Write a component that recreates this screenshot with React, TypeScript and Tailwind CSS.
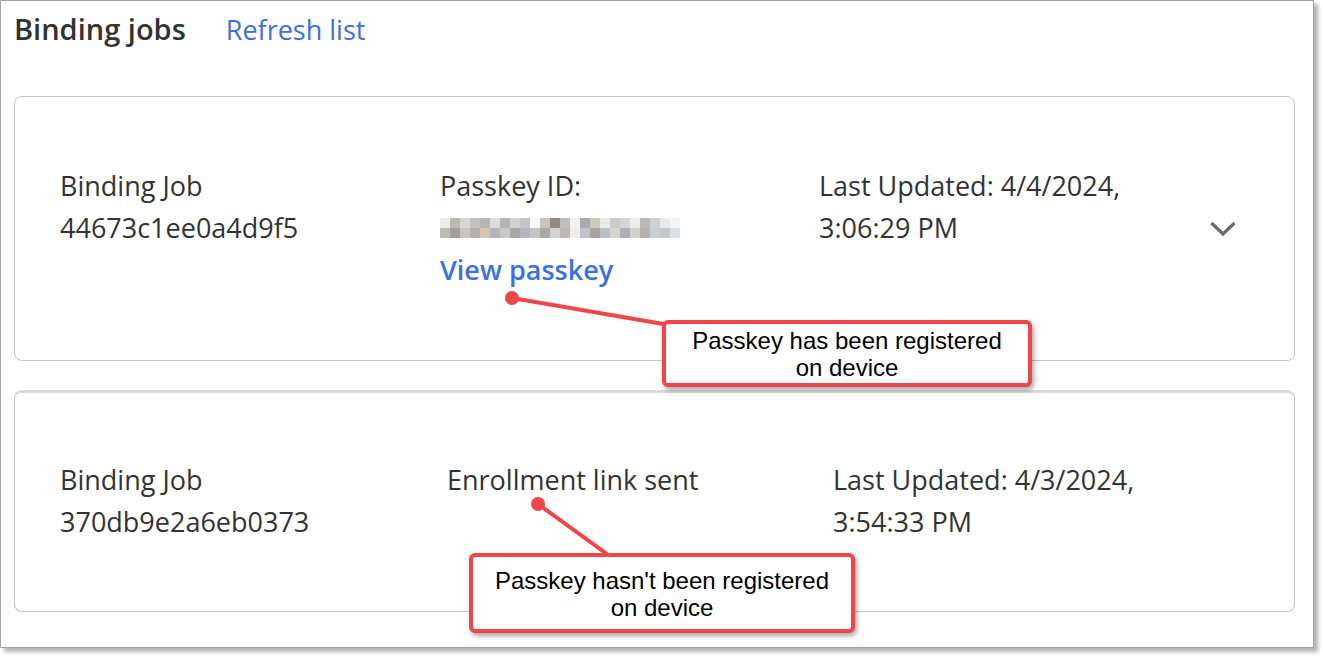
import React from "react";

const font = { fontFamily: "'Open Sans', 'Liberation Sans', sans-serif" };

const mosaic = [
  ["#eeeae6", "#bcb8b3", "#d9d6d2", "#c4c2c0", "#b7b6b2", "#dcdcdc", "#b8b3ad", "#cfd2d6", "#c2c4c6", "#fafafa", "#c9c3bb", "#8f8c87", "#c0bfbd", "#f4f2ee", "#a9aab0", "#cfc8bf", "#e9e9ea", "#cfcac3", "#d4d6d9", "#f0ede8", "#bcb9b5", "#cfd0d2", "#e8eaee", "#f5f5f5"],
  ["#b9bcb7", "#a19f99", "#c9c6c2", "#b5b1ab", "#d4c6b4", "#b3b6ba", "#c8c8c8", "#a9a6a5", "#b7b4c0", "#c3c6c4", "#a8a9a6", "#d5d2cf", "#bbb9b7", "#efedeb", "#c1c3c8", "#a7a5a4", "#bcbec1", "#d8d6d3", "#adb1b5", "#cfd1d3", "#b4b3b1", "#cacdd1", "#c5c7c9", "#dcdfe3"],
];

const Mosaic = () => (
  <svg width="240" height="20" viewBox="0 0 240 20" className="block">
    {mosaic.map((row, r) =>
      row.map((c, i) => (
        <rect key={`${r}-${i}`} x={i * 10} y={r * 10} width="10" height="10" fill={c} />
      ))
    )}
  </svg>
);

const Chevron = () => (
  <svg width="26" height="16" viewBox="0 0 26 16" fill="none">
    <path d="M1.5 2 L13 13 L24.5 2" stroke="#6b6b6b" strokeWidth="3.2" />
  </svg>
);

const Callout = ({ className, children }: { className: string; children: React.ReactNode }) => (
  <div
    className={`absolute rounded-[6px] border-[4px] border-[#f0454a] bg-white text-center text-[24px] leading-[27px] text-black shadow-[2px_3px_5px_rgba(0,0,0,0.35)] ${className}`}
    style={{ fontFamily: "'Liberation Sans', Arial, sans-serif" }}
  >
    {children}
  </div>
);

export default function App() {
  return (
    <div className="h-[657px] w-[1323px] bg-white">
      <div
        className="relative h-[648px] w-[1314px] border border-[#a3a3a3] bg-white text-[#333333] shadow-[4px_4px_4px_rgba(0,0,0,0.3)]"
        style={font}
      >
        <div className="flex h-[56px] items-center gap-[40px] px-[13px] pb-[2px]">
          <h1 className="text-[29px] font-semibold leading-none">Binding jobs</h1>
          <span className="mt-[3px] text-[27px] leading-none text-[#3b6fe6]">Refresh list</span>
        </div>

        <div className="mt-[39px] pl-[13px] pr-[18px]">
          <div className="flex h-[265px] items-start rounded-[8px] border border-[#c4c4c4] pt-[68px] text-[27px] leading-[42px]">
            <div className="w-[425px] pl-[45px]">
              <div>Binding Job</div>
              <div>44673c1ee0a4d9f5</div>
            </div>
            <div className="w-[379px]">
              <div>Passkey ID:</div>
              <div className="flex h-[42px] items-center">
                <Mosaic />
              </div>
              <div className="font-semibold text-[#3b6fe6]">View passkey</div>
            </div>
            <div className="w-[391px]">
              <div>Last Updated: 4/4/2024,</div>
              <div>3:06:29 PM</div>
            </div>
            <div className="pt-[56px]">
              <Chevron />
            </div>
          </div>

          <div className="mt-[29px] flex h-[222px] items-start rounded-[8px] border border-[#c4c4c4] border-t-[3px] border-t-[#dadada] pt-[66px] text-[27px] leading-[42px]">
            <div className="w-[432px] pl-[45px]">
              <div>Binding Job</div>
              <div>370db9e2a6eb0373</div>
            </div>
            <div className="w-[386px]">
              <div>Enrollment link sent</div>
            </div>
            <div>
              <div>Last Updated: 4/3/2024,</div>
              <div>3:54:33 PM</div>
            </div>
          </div>
        </div>

        <svg className="absolute left-0 top-0" width="1314" height="648">
          <line x1="511" y1="297" x2="668" y2="324" stroke="#f0454a" strokeWidth="4" />
          <circle cx="511" cy="297" r="7" fill="#f0454a" />
          <line x1="537" y1="503" x2="610" y2="556" stroke="#f0454a" strokeWidth="4" />
          <circle cx="537" cy="503" r="7" fill="#f0454a" />
        </svg>

        <Callout className="left-[661px] top-[319px] h-[67px] w-[370px] pt-[3px]">
          Passkey has been registered
          <br />
          on device
        </Callout>
        <Callout className="left-[468px] top-[552px] h-[80px] w-[386px] pt-[10px]">
          Passkey hasn't been registered
          <br />
          on device
        </Callout>
      </div>
    </div>
  );
}
